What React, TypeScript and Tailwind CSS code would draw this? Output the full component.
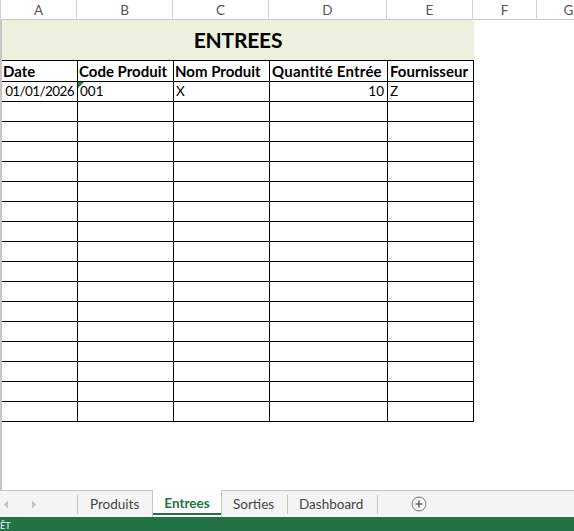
import React from "react";

const font = { fontFamily: "Lato, 'Open Sans', Arial, sans-serif" };

const rows = Array.from({ length: 16 });

function HeaderCell({ label, className }: { label: string; className: string }) {
  return (
    <div
      className={`h-[20px] shrink-0 border-r border-[#d4d4d4] flex items-center justify-center text-[13.5px] text-[#555] ${className}`}
    >
      {label}
    </div>
  );
}

function Cell({ children, className = "" }: { children?: React.ReactNode; className?: string }) {
  return (
    <div
      className={`relative h-[20px] border-r border-b border-black flex items-center text-[13.5px] text-black whitespace-nowrap overflow-hidden ${className}`}
    >
      {children}
    </div>
  );
}

function Head({ children, className = "" }: { children: React.ReactNode; className?: string }) {
  return <Cell className={`h-[21px] font-bold text-[15px] ${className}`}>{children}</Cell>;
}

export default function App() {
  return (
    <div className="w-[574px] h-[531px] flex flex-col overflow-hidden bg-white" style={font}>
      {/* worksheet */}
      <div className="flex-1 flex flex-col min-h-0">
        {/* column letters */}
        <div className="flex h-[20px] border-b border-[#c8c8c8] bg-white">
          <div className="w-[2px] h-[20px] border-r border-[#d4d4d4]" />
          <HeaderCell label="A" className="w-[76px]" />
          <HeaderCell label="B" className="w-[96px]" />
          <HeaderCell label="C" className="w-[96px]" />
          <HeaderCell label="D" className="w-[118px]" />
          <HeaderCell label="E" className="w-[86px]" />
          <HeaderCell label="F" className="w-[64px]" />
          <HeaderCell label="G" className="w-[64px]" />
        </div>

        {/* sheet body */}
        <div className="flex-1 border-l-2 border-[#c6c6c6]">
          <div className="w-[472px] h-[40px] bg-[#ebf1de] flex items-center justify-center">
            <span className="text-[21px] font-bold text-black tracking-[-0.2px]">ENTREES</span>
          </div>

          <div className="w-[472px] grid grid-cols-[76px_96px_96px_118px_86px] border-t border-black">
            <Head className="pl-[1px]">Date</Head>
            <Head className="pl-[1px]">Code Produit</Head>
            <Head className="pl-[1px]">Nom Produit</Head>
            <Head className="pl-[2px] tracking-[0.2px]">Quantité Entrée</Head>
            <Head className="pl-[2px]">Fournisseur</Head>

            <Cell className="justify-end pr-[3px] tracking-[-0.6px]">01/01/2026</Cell>
            <Cell className="pl-[2px]">
              <span className="absolute left-0 top-0 w-0 h-0 border-t-[6px] border-r-[6px] border-t-[#1f7a37] border-r-transparent" />
              001
            </Cell>
            <Cell className="pl-[2px]">X</Cell>
            <Cell className="justify-end pr-[3px]">10</Cell>
            <Cell className="pl-[2px]">Z</Cell>

            {rows.map((_, i) => (
              <React.Fragment key={i}>
                <Cell />
                <Cell />
                <Cell />
                <Cell />
                <Cell />
              </React.Fragment>
            ))}
          </div>
        </div>
      </div>

      {/* sheet tabs */}
      <div className="h-[27px] flex items-stretch bg-[#f4f4f4] text-[13.5px] text-[#444]">
        <div className="w-[77px] flex items-center border-t border-[#c6c6c6]">
          <svg width="6" height="9" viewBox="0 0 6 9" className="ml-[3px]">
            <path d="M5 0.5 L0.8 4.5 L5 8.5 Z" fill="#c4c4c4" />
          </svg>
          <svg width="6" height="9" viewBox="0 0 6 9" className="ml-[22px]">
            <path d="M1 0.5 L5.2 4.5 L1 8.5 Z" fill="#c4c4c4" />
          </svg>
        </div>
        <div className="w-[75px] flex items-center border-t border-[#c6c6c6]">
          <div className="w-px h-[19px] bg-[#c6c6c6]" />
          <span className="ml-[12px]">Produits</span>
        </div>
        <div className="relative w-[70px] flex items-center justify-center bg-white border-x border-[#c6c6c6]">
          <span className="font-bold text-[#217346]">Entrees</span>
          <div className="absolute left-0 right-0 bottom-[2px] h-[2px] bg-[#217346]" />
        </div>
        <div className="w-[66px] flex items-center border-t border-[#c6c6c6]">
          <span className="ml-[11px]">Sorties</span>
          <div className="ml-auto w-px h-[19px] bg-[#c6c6c6]" />
        </div>
        <div className="w-[90px] flex items-center border-t border-[#c6c6c6]">
          <span className="ml-[11px]">Dashboard</span>
          <div className="ml-auto w-px h-[19px] bg-[#c6c6c6]" />
        </div>
        <div className="flex-1 flex items-center border-t border-[#c6c6c6]">
          <svg width="16" height="16" viewBox="0 0 16 16" className="ml-[33px]">
            <circle cx="8" cy="8" r="7" fill="none" stroke="#7a7a7a" strokeWidth="1" />
            <path d="M8 4.5 V11.5 M4.5 8 H11.5" stroke="#6a6a6a" strokeWidth="1.6" />
          </svg>
        </div>
      </div>

      {/* status bar */}
      <div className="h-[14px] bg-[#217346] flex items-end">
        <span className="block pl-0 pb-[1px] text-[9px] leading-none text-white">ÊT</span>
      </div>
    </div>
  );
}
